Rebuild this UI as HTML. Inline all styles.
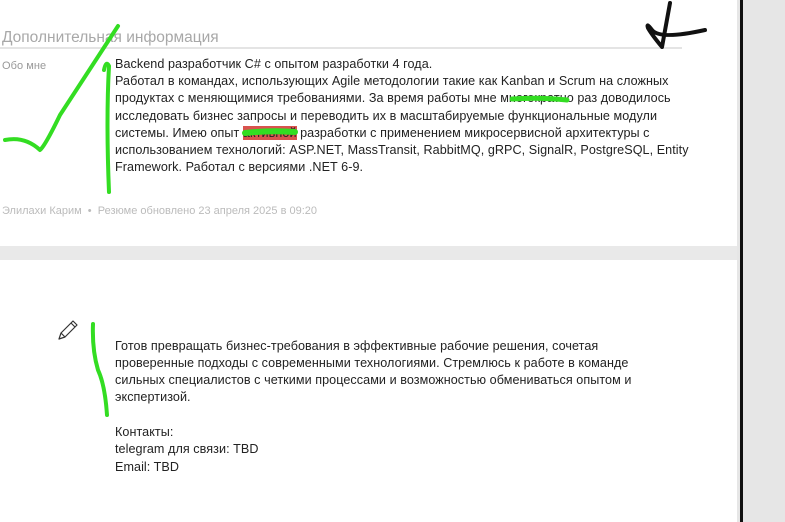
<!DOCTYPE html>
<html><head><meta charset="utf-8"><style>
html,body{margin:0;padding:0;width:785px;height:522px;overflow:hidden;background:#fff;position:relative;font-family:"Liberation Sans","DejaVu Sans",sans-serif;}
.t{position:absolute;white-space:nowrap;font-size:12.6px;color:#222;letter-spacing:0.06px;}
.g{color:#b5b5b5;}
</style></head><body>
<div style="position:absolute;left:737px;top:0;width:48px;height:522px;background:#e6e6e6"></div>
<div style="position:absolute;left:740px;top:0;width:3px;height:522px;background:#111"></div>
<div style="position:absolute;left:0;top:246px;width:737px;height:14px;background:#e9e9e9"></div>
<div style="position:absolute;left:0;top:47px;width:682px;height:2px;background:#e4e4e4"></div>
<div class="t g" style="left:2px;top:29px;font-size:15.5px;color:#a8a8a8;letter-spacing:0">Дополнительная информация</div>
<div class="t g" style="left:2px;top:60px;font-size:11px;color:#999">Обо мне</div>
<div class="t" style="left:115px;top:57px">Backend разработчик C# с опытом разработки 4 года.</div>
<div class="t" style="left:115px;top:74px">Работал в командах, использующих Agile методологии такие как Kanban и Scrum на сложных</div>
<div class="t" style="left:115px;top:91px">продуктах с меняющимися требованиями. За время работы мне многократно раз доводилось</div>
<div class="t" style="left:115px;top:109px">исследовать бизнес запросы и переводить их в масштабируемые функциональные модули</div>
<div class="t" style="left:115px;top:126px">системы. Имею опыт <span style="background:#d9534f">активной</span> разработки с применением микросервисной архитектуры с</div>
<div class="t" style="left:115px;top:143px">использованием технологий: ASP.NET, MassTransit, RabbitMQ, gRPC, SignalR, PostgreSQL, Entity</div>
<div class="t" style="left:115px;top:160px">Framework. Работал с версиями .NET 6-9.</div>
<div class="t g" style="left:2px;top:205px;font-size:11px;color:#bbb;letter-spacing:0">Элилахи Карим &nbsp;•&nbsp; Резюме обновлено 23 апреля 2025 в 09:20</div>
<div class="t" style="left:115px;top:339px">Готов превращать бизнес-требования в эффективные рабочие решения, сочетая</div>
<div class="t" style="left:115px;top:356px">проверенные подходы с современными технологиями. Стремлюсь к работе в команде</div>
<div class="t" style="left:115px;top:373px">сильных специалистов с четкими процессами и возможностью обмениваться опытом и</div>
<div class="t" style="left:115px;top:390px">экспертизой.</div>
<div class="t" style="left:115px;top:425px">Контакты:</div>
<div class="t" style="left:115px;top:442px">telegram для связи: TBD</div>
<div class="t" style="left:115px;top:460px">Email: TBD</div>
<svg style="position:absolute;left:0;top:0" width="785" height="522">
<g fill="none" stroke="#33dd22" stroke-linecap="round" stroke-linejoin="round">
<path d="M5 140 Q25 136 40 150 Q45 146 60 115 L118 26" stroke-width="4"/>
<path d="M104 70 Q106 60 109 66 Q106 120 109 192" stroke-width="4"/>
<path d="M93 324 Q92 350 98 370 Q105 385 107 415" stroke-width="4"/>
<path d="M245 133 Q270 130 295 132" stroke-width="6"/>
<path d="M512 99 Q540 97 567 100" stroke-width="5"/>
</g>
<path d="M670 3 L662 47 Q652 35 648 28 Q646 22 652 30 Q660 40 705 30" fill="none" stroke="#111" stroke-width="4" stroke-linecap="round" stroke-linejoin="round"/>
<g fill="none" stroke="#333" stroke-width="1.2" stroke-linejoin="round">
<path d="M59 339 L61 333 L73 321 L77 325 L65 337 Z M71 323 L75 327 M61 333 L65 337"/>
</g>
</svg>
</body></html>
